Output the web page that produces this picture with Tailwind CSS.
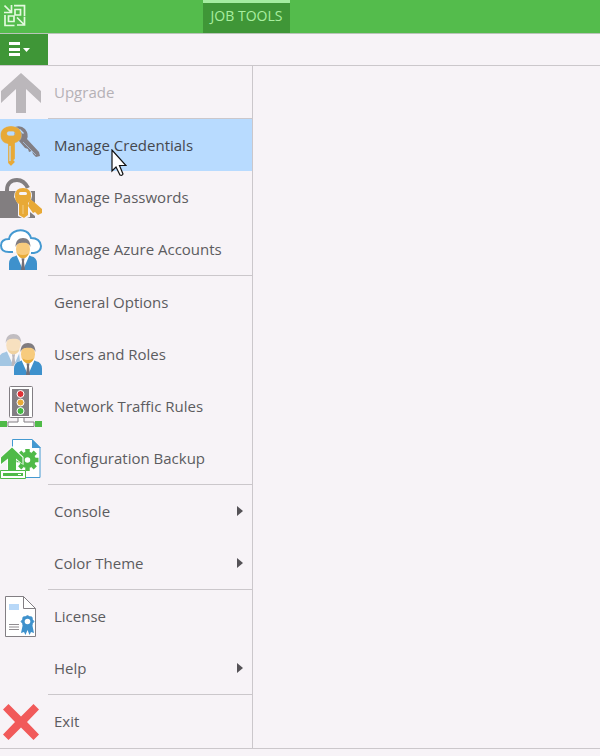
<!DOCTYPE html>
<html lang="en">
<head>
<meta charset="utf-8">
<meta name="viewport" content="width=device-width, initial-scale=1">
<title>Main menu</title>
<script src="https://cdn.jsdelivr.net/npm/@tailwindcss/browser@4"></script>
</head>
<body class="min-h-screen bg-[#f7f3f7] font-['Open_Sans','Noto_Sans',sans-serif] text-[15px] text-[#5c5c60]">
<header>
  <div class="flex h-[34px] border-b border-[#b9c4b9] bg-[#54bc4c]">
    <div class="w-[203px] pl-1 pt-1">
      <svg class="size-6" viewBox="0 0 24 24" fill="none" stroke="#e4f9df" stroke-width="1.7" aria-hidden="true">
        <path d="M.5 1.500 7 8M7.500 1v7.500H0M10 1.700h10.500v10.500M1 11v10.500h9.500M13 13.500l7 7M20.500 13v8H13M11 5.500h5.500V11H11zM4.500 12h5.500v5.500H4.500z"/>
      </svg>
    </div>
    <button class="h-full w-[87px] border-t-3 border-[#a5eda0] bg-[#3f9637] pb-1 text-sm whitespace-nowrap text-[#a9efa0]">JOB TOOLS</button>
  </div>
  <div class="flex h-8 border-b border-[#cbc7cb]">
    <button class="w-12 bg-[#3f9637]" aria-label="Main menu">
      <svg class="h-8 w-12" viewBox="0 0 48 32" fill="#fff"><path d="M9 8h11v3H9zM9 14h11v3H9zM9 19h11v3H9zM23 14h7l-3.500 4z"/></svg>
    </button>
  </div>
</header>
<svg class="hidden" aria-hidden="true">
  <defs>
    <symbol id="person" viewBox="0 0 28 30" preserveAspectRatio="none">
      <path d="M0 30v-6q0-6 6-7l4-2h8l4 2q6 1 6 7v6z" fill="#3e91cc"/>
      <path d="M7 15l7 15 7-15z" fill="#fff"/>
      <path d="M12.500 19h3l-.5 3 1 8h-4l1-8z" fill="#737077"/>
      <ellipse cx="14" cy="10.500" rx="7" ry="8.500" fill="#f7cb7d"/>
      <path d="M8.500 14.500q5.500 3 11 0-1.500 4.500-5.500 4.500t-5.500-4.500z" fill="#e8ac3a"/>
      <path d="M6.500 8.500C6.500 3 9.500 0 14 0s7.500 3 7.500 8.500C20 5 17.500 4.500 14 4.500s-6 .5-7.500 4z" fill="#807c80"/>
    </symbol>
    <symbol id="key" viewBox="0 0 22 40">
      <path fill-rule="evenodd" d="M11 0c6 0 10.500 3.500 10.500 9 0 4-2 6.500-6.500 8v16l-1.500 1 1.500 2-4 4-3-3V18C3 17 .5 14 .5 9 .5 3.500 5 0 11 0zM9 5.500q-2 0-2 2t2 2h4q2 0 2-2t-2-2zM9.500 20v15h1V20z"/>
    </symbol>
  </defs>
</svg>
<main class="flex border-b border-[#cbc7cb]">
  <nav class="w-[253px] shrink-0 border-r border-[#cbc7cb] pb-px" aria-label="Application">
    <button class="flex h-[52px] w-full items-center text-left text-[#b5b1b6]" disabled>
      <svg class="mr-3 size-[42px]" viewBox="0 0 42 42" fill="#bbb7bb" aria-hidden="true"><path d="M21 2l20 18v12L26 18v24H16V18L1 32V20z"/></svg>Upgrade
    </button>
    <hr class="ml-12 border-[#cbc7cb]">
    <button class="flex h-[52px] w-full items-center bg-[#b8dbff] text-left text-[#45484e]">
      <svg class="mr-3 size-[42px]" viewBox="0 0 42 42" aria-hidden="true">
        <path fill="#827e83" fill-rule="evenodd" d="M15 3q6-2 10 2 4 5 2 10l12 13 1 4-4 1-3-3-1-3-3 1-1-3-3-1-6-7-5-1zM20 5l-1 1 4 4 1-1z"/>
        <path d="M23 18 36 31" stroke="#b8dbff" stroke-width=".6"/>
        <use href="#key" x="0" y="2" width="22" height="40" fill="#e8a936" stroke="#b8dbff" stroke-width=".3"/>
      </svg>Manage Credentials
    </button>
    <button class="flex h-[52px] w-full items-center text-left">
      <svg class="mr-3 size-[42px]" viewBox="0 0 42 42" aria-hidden="true">
        <path d="M7 17v-3C7 8 11 4 17 4q7 0 11 8" fill="none" stroke="#827e80" stroke-width="4"/>
        <path d="M0 15h35v27H0z" fill="#827e80"/>
        <path d="M14 21q0-9 9-9 9 0 9 8l-1 4 11 9-1 6-6 1-5-4v5l-6 2-6-3V28z" fill="#f7f3f7"/>
        <path d="M0 34h13v8H0z" fill="#827e80"/>
        <path fill="#e8a936" d="M30 23l4 3 8 7v4l-4 2-3-3-2 1-5-7z"/>
        <path fill="#e8a936" fill-rule="evenodd" d="M23 12q8 0 8 8 0 5-3 7v12l-4 3-5-3V28q-4-2-4-8 0-8 8-8zM20.500 16q-1.500 0-1.500 1.500t1.500 1.500h5q1.500 0 1.500-1.500T25.500 16z"/>
        <path d="M23 29v9" stroke="#f5ce87"/>
      </svg>Manage Passwords
    </button>
    <button class="flex h-[52px] w-full items-center text-left">
      <svg class="mr-3 size-[42px]" viewBox="0 0 42 42" aria-hidden="true">
        <path d="M13 24H9C3 24 1 21 1 17.500 1 13 4 11 9 11 10 5 16 1.500 23 2.500q6 1 8 7.500 9 0 10 8 0 6-7 7h-3" fill="#fff" stroke="#4499d1" stroke-width="2"/>
        <use href="#person" x="9" y="10" width="28" height="32"/>
      </svg>Manage Azure Accounts
    </button>
    <hr class="ml-12 border-[#cbc7cb]">
    <button class="flex h-[52px] w-full items-center pl-[54px] text-left">General Options</button>
    <button class="flex h-[52px] w-full items-center text-left">
      <svg class="mr-3 size-[42px]" viewBox="0 0 42 42" aria-hidden="true">
        <use href="#person" x="-1" y="1" width="29" height="32" opacity=".45"/>
        <path d="M13 43v-7q0-6 7-8l-1-8q0-8 6-10h3v33z" fill="#f7f3f7"/>
        <use href="#person" x="14" y="10" width="28" height="32"/>
      </svg>Users and Roles
    </button>
    <button class="flex h-[52px] w-full items-center text-left">
      <svg class="mr-3 size-[42px]" viewBox="0 0 42 42" aria-hidden="true">
        <path d="M0 36h7v6H0zM35 36h7v6h-7z" fill="#4fba48"/>
        <path d="M18 32v5H8v4.500h26V37H24v-5z" fill="#fff" stroke="#827e83"/>
        <rect x="9.500" y="1.500" width="23" height="31" rx="1" fill="#fff" stroke="#827e83"/>
        <path d="M12 4h17v27H12z" fill="#827e83"/>
        <g stroke="#fff"><circle cx="20.500" cy="9" r="3.500" fill="#df3036"/><circle cx="20.500" cy="17.500" r="3.500" fill="#e8a936"/><circle cx="20.500" cy="26" r="3.500" fill="#44b943"/></g>
      </svg>Network Traffic Rules
    </button>
    <button class="flex h-[52px] w-full items-center text-left">
      <svg class="mr-3 size-[42px]" viewBox="0 0 42 42" aria-hidden="true">
        <path d="M12.500 2.500H32l8 8v30H12.500z" fill="#fff" stroke="#4499d1"/><path d="M32 2v9h9z" fill="#4499d1"/>
        <g fill="none" stroke="#4fba48"><circle cx="27.500" cy="23" r="5.500" stroke-width="5.500"/><path d="M27.500 12v3.500m0 15V34M16.500 23H20m15 0h3.500M19.700 15.200l2.400 2.400m10.800 10.800 2.400 2.400m0-15.600-2.400 2.400M22.100 28.400l-2.400 2.400" stroke-width="4.500"/></g>
        <path d="M12 9l11.500 11v8L16 23v10H7V23l-7 6v-8z" fill="#fff"/>
        <path d="M12 10.500l10.500 10V27L16 21.500V33H8V21.500L1 27v-6.500z" fill="#4fba48"/>
        <path d="M.5 33.500h25v8H.5z" fill="#fff" stroke="#4fba48"/><path d="M3 36h20v3H3z" fill="#4fba48"/><path d="M18 37h3v1h-3z" fill="#fff"/>
      </svg>Configuration Backup
    </button>
    <hr class="ml-12 border-[#cbc7cb]">
    <button class="flex h-[52px] w-full items-center justify-between pl-[54px] pr-[9px] text-left" aria-haspopup="menu">Console
      <svg class="h-2.5 w-1.5" viewBox="0 0 6 10" fill="#555257" aria-hidden="true"><path d="M0 0l6 5-6 5z"/></svg>
    </button>
    <button class="flex h-[52px] w-full items-center justify-between pl-[54px] pr-[9px] text-left" aria-haspopup="menu">Color Theme
      <svg class="h-2.5 w-1.5" viewBox="0 0 6 10" fill="#555257" aria-hidden="true"><path d="M0 0l6 5-6 5z"/></svg>
    </button>
    <hr class="ml-12 border-[#cbc7cb]">
    <button class="flex h-[52px] w-full items-center text-left">
      <svg class="mr-3 size-[42px]" viewBox="0 0 42 42" aria-hidden="true">
        <path d="M5.500 1.500h18l12 12v28h-30z" fill="#fff" stroke="#827e83"/><path d="M23.500 1.500v12h12" fill="none" stroke="#827e83"/>
        <path d="M9 9h10v6H9z" fill="#b8d8f8"/>
        <path d="M9 29.500h10M9 32h10M9 34.500h10" stroke="#918d91"/>
        <path d="M22.500 31l-1.500 7 3-1 1.500 3 2-5 2 5 1.500-3 3 1-1.500-7z" fill="#3e91cc"/>
        <path d="M27.500 20.500l2 1 2.500.5.500 2.500 1.500 2-1.500 2-.5 2.500-2.500.5-2 1.500-2-1.500-2.500-.5-.5-2.500-1.500-2 1.500-2 .5-2.500 2.500-.5z" fill="#3e91cc" stroke="#3e91cc" stroke-width=".7"/>
        <circle cx="27.500" cy="26.500" r="2.800" fill="#fff"/>
      </svg>License
    </button>
    <button class="flex h-[52px] w-full items-center justify-between pl-[54px] pr-[9px] text-left" aria-haspopup="menu">Help
      <svg class="h-2.5 w-1.5" viewBox="0 0 6 10" fill="#555257" aria-hidden="true"><path d="M0 0l6 5-6 5z"/></svg>
    </button>
    <hr class="ml-12 border-[#cbc7cb]">
    <button class="flex h-[52px] w-full items-center text-left">
      <svg class="mr-3 size-[42px]" viewBox="0 0 42 42" fill="#f15a5a" aria-hidden="true"><path d="M8.500 4 21 16.500 33.500 4l5.500 5.500L27 22l12 12.500-5.500 5.500L21 27.500 8.500 40 3 34.500 15 22 3 9.500z"/></svg>Exit
    </button>
  </nav>
  <section class="flex-1" aria-label="Workspace"></section>
</main>
<svg class="pointer-events-none absolute left-[111px] top-[149px] h-7 w-4" viewBox="0 0 16 28" fill="#fff" stroke="#111" stroke-width="1.200" aria-hidden="true"><path d="M1 1v21l4-4 4 8q2 1 3-1L8.500 16.500H15z"/></svg>
</body>
</html>
